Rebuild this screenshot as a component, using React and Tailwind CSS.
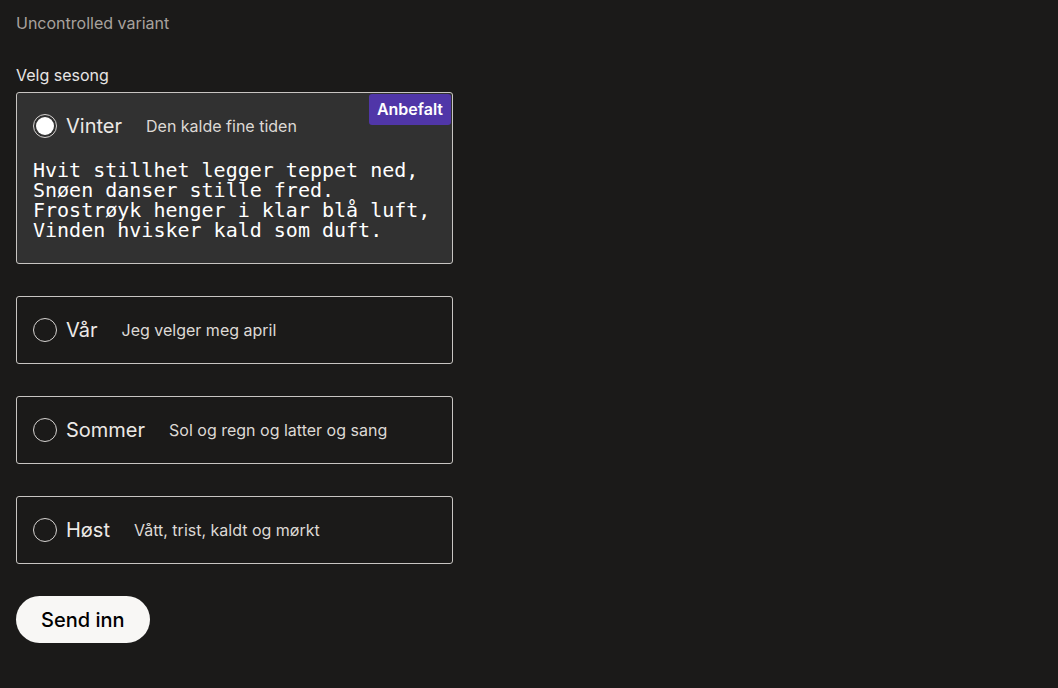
import { useState } from 'react';

const seasons = [
    {
        value: 'vinter',
        label: 'Vinter',
        description: 'Den kalde fine tiden',
        recommended: true,
        poem: 'Hvit stillhet legger teppet ned,\nSnøen danser stille fred.\nFrostrøyk henger i klar blå luft,\nVinden hvisker kald som duft.',
    },
    { value: 'var', label: 'Vår', description: 'Jeg velger meg april' },
    { value: 'sommer', label: 'Sommer', description: 'Sol og regn og latter og sang' },
    { value: 'host', label: 'Høst', description: 'Vått, trist, kaldt og mørkt' },
];

const Radio = ({ checked }) => (
    <span className="flex h-6 w-6 shrink-0 items-center justify-center rounded-full border border-[#d6d3d1]">
        {checked && <span className="h-[18px] w-[18px] rounded-full bg-white" />}
    </span>
);

const SeasonCard = ({ season, checked, onSelect }) => (
    <label
        onClick={onSelect}
        className={`relative flex cursor-pointer flex-col rounded-[3px] border border-[#c8c5c2] px-4 ${checked ? 'bg-[#313131]' : 'bg-transparent'}`}
    >
        {season.recommended && (
            <span className="absolute right-[1px] top-[1px] rounded-[3px] bg-[#5036a8] px-2 py-[5px] text-[16px] font-semibold leading-[21px] text-white">
                Anbefalt
            </span>
        )}
        <div className="flex h-[66px] items-center">
            <Radio checked={checked} />
            <span className="ml-[9px] text-[20px] leading-none text-[#ece9e6]">{season.label}</span>
            <span className="ml-6 text-[16px] leading-none text-[#ddd9d5]">{season.description}</span>
        </div>
        {season.poem && (
            <pre className="mt-[1px] mb-[23px] text-[20px] leading-[20px] text-white" style={{ fontFamily: '"DejaVu Sans Mono", monospace' }}>
                {season.poem}
            </pre>
        )}
    </label>
);

const App = () => {
    const [selected, setSelected] = useState('vinter');

    return (
        <div className="min-h-screen bg-[#1b1a19] px-4 pt-[13px]" style={{ fontFamily: 'Inter, "Noto Sans", sans-serif' }}>
            <p className="text-[16px] leading-5 text-[#a8a29e]">Uncontrolled variant</p>

            <form className="mt-[32px] w-[437px]" onSubmit={(e) => e.preventDefault()}>
                <p className="mb-[7px] text-[16px] leading-5 text-[#e7e5e4]">Velg sesong</p>
                <div className="flex flex-col gap-8">
                    {seasons.map((season) => (
                        <SeasonCard
                            key={season.value}
                            season={season}
                            checked={selected === season.value}
                            onSelect={() => setSelected(season.value)}
                        />
                    ))}
                </div>
                <button
                    type="submit"
                    className="mt-8 h-[47px] rounded-full bg-[#f8f7f5] px-[25px] text-[20px] font-medium text-black"
                >
                    Send inn
                </button>
            </form>
        </div>
    );
};

export default App;
